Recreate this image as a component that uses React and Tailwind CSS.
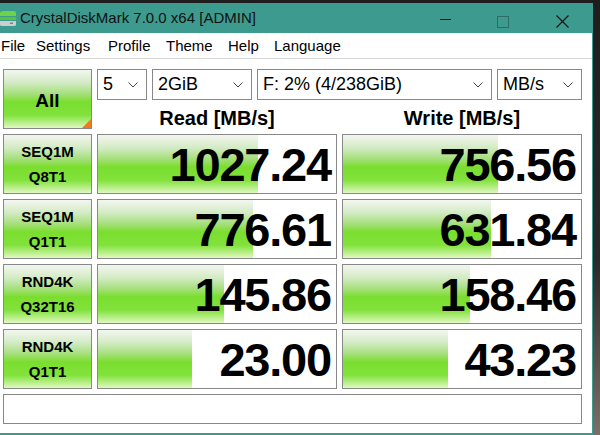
import React from 'react';

const rows = [
  { l1: 'SEQ1M', l2: 'Q8T1', read: '1027.24', rw: 160, write: '756.56', ww: 155 },
  { l1: 'SEQ1M', l2: 'Q1T1', read: '776.61', rw: 155, write: '631.84', ww: 148 },
  { l1: 'RND4K', l2: 'Q32T16', read: '145.86', rw: 126, write: '158.46', ww: 127 },
  { l1: 'RND4K', l2: 'Q1T1', read: '23.00', rw: 94, write: '43.23', ww: 105 },
];

const green =
  'bg-[linear-gradient(to_bottom,#f3f6f0_0%,#d3ebc4_22%,#a3df78_42%,#7ade2e_55%,#82e23c_78%,#c6f29c_94%,#e2f8c8_100%)]';

const Chevron = () => (
  <svg width="10" height="6" viewBox="0 0 10 6" className="shrink-0">
    <path d="M0.5 0.5 L5 5 L9.5 0.5" fill="none" stroke="#444" strokeWidth="1" />
  </svg>
);

const Select = ({ text, w }) => (
  <div className={`${w} h-[31px] border border-[#888] bg-white flex items-center justify-between pl-[5px] pr-[8px] text-[18px] text-black`}>
    <span>{text}</span>
    <Chevron />
  </div>
);

const Score = ({ value, width }) => (
  <div className="relative h-[60px] border border-[#888] bg-white overflow-hidden">
    <div className={`absolute left-0 top-0 bottom-0 ${green}`} style={{ width }} />
    <div className="relative h-full flex items-center justify-end pr-[5px] pt-[1px] text-[47px] font-bold tracking-[-1.2px] text-black leading-none">
      {value}
    </div>
  </div>
);

const App = () => {
  return (
    <div className="w-[600px] h-[435px] flex bg-[linear-gradient(to_bottom,#1e1e1e_0%,#2a2a2a_60%,#7a7068_100%)] overflow-hidden" style={{ fontFamily: '"Liberation Sans", Arial, sans-serif' }}>
      <div className="w-[593px] mt-[3px] flex flex-col border-r border-b-2 border-[#3e9a8e] bg-white">
        {/* title bar */}
        <div className="h-[30px] bg-[#3d9a8e] flex items-center relative">
          <svg width="16" height="17" viewBox="0 0 16 17" className="ml-0 mr-[4px]">
            <path d="M0 3 Q0 1 4 1 L14 1 Q16 1 16 3 L16 6 L0 6 Z" fill="#6fd24a" />
            <path d="M0 7 L16 7 L16 10 L0 10 Z" fill="#58c23a" />
            <path d="M0 11 L16 11 L16 15 Q16 16 14 16 L2 16 Q0 16 0 15 Z" fill="#c9cfd0" />
            <rect x="10" y="12.5" width="3" height="1.5" fill="#7a8588" />
          </svg>
          <span className="text-[15px] text-[#111] pt-[1px]">CrystalDiskMark 7.0.0 x64 [ADMIN]</span>
          <div className="absolute left-[440px] top-[16px] w-[11px] h-px bg-[#111]" />
          <div className="absolute left-[497px] top-[13px] w-[12px] h-[12px] border border-[#2b6e66]" />
          <svg width="13" height="13" viewBox="0 0 13 13" className="absolute left-[556px] top-[12px]">
            <path d="M0.5 0.5 L12.5 12.5 M12.5 0.5 L0.5 12.5" stroke="#111" strokeWidth="1.1" />
          </svg>
        </div>
        {/* menu */}
        <div className="h-[26px] flex items-center pt-[1px] border-b border-[#d6d6d6] text-[15px] text-black">
          <span className="w-[36px] pl-[1px]">File</span>
          <span className="w-[72px]">Settings</span>
          <span className="w-[58px]">Profile</span>
          <span className="w-[62px]">Theme</span>
          <span className="w-[46px]">Help</span>
          <span>Language</span>
        </div>
        {/* body */}
        <div className="flex-1 pt-[10px] pl-[3px] grid grid-cols-[89px_240px_240px] gap-x-[5px] gap-y-[5px] content-start">
          <div className={`relative h-[60px] border border-[#888] ${green} flex items-center justify-center pt-[4px] text-[19px] font-bold text-black`}>
            All
            <div className="absolute right-0 bottom-0 w-0 h-0 border-l-[9px] border-l-transparent border-b-[9px] border-b-[#f07a1c]" />
          </div>
          <div className="col-span-2 h-[60px] flex flex-col">
            <div className="flex gap-[5px]">
              <Select text="5" w="w-[50px]" />
              <Select text="2GiB" w="w-[100px]" />
              <Select text="F: 2% (4/238GiB)" w="w-[235px]" />
              <Select text="MB/s" w="w-[85px]" />
            </div>
            <div className="h-[29px] grid grid-cols-2 gap-x-[5px] items-end pb-[1px] text-[20px] font-bold text-black leading-none">
              <div className="text-center">Read [MB/s]</div>
              <div className="text-center">Write [MB/s]</div>
            </div>
          </div>
          {rows.map((r, i) => (
            <React.Fragment key={i}>
              <div className={`h-[60px] border border-[#888] ${green} flex flex-col items-center justify-center gap-[10px] text-[15px] font-bold text-black leading-none`}>
                <span>{r.l1}</span>
                <span>{r.l2}</span>
              </div>
              <Score value={r.read} width={r.rw} />
              <Score value={r.write} width={r.ww} />
            </React.Fragment>
          ))}
          <div className="col-span-3 h-[30px] border border-[#888] bg-white" />
        </div>
      </div>
    </div>
  );
};

export default App;
